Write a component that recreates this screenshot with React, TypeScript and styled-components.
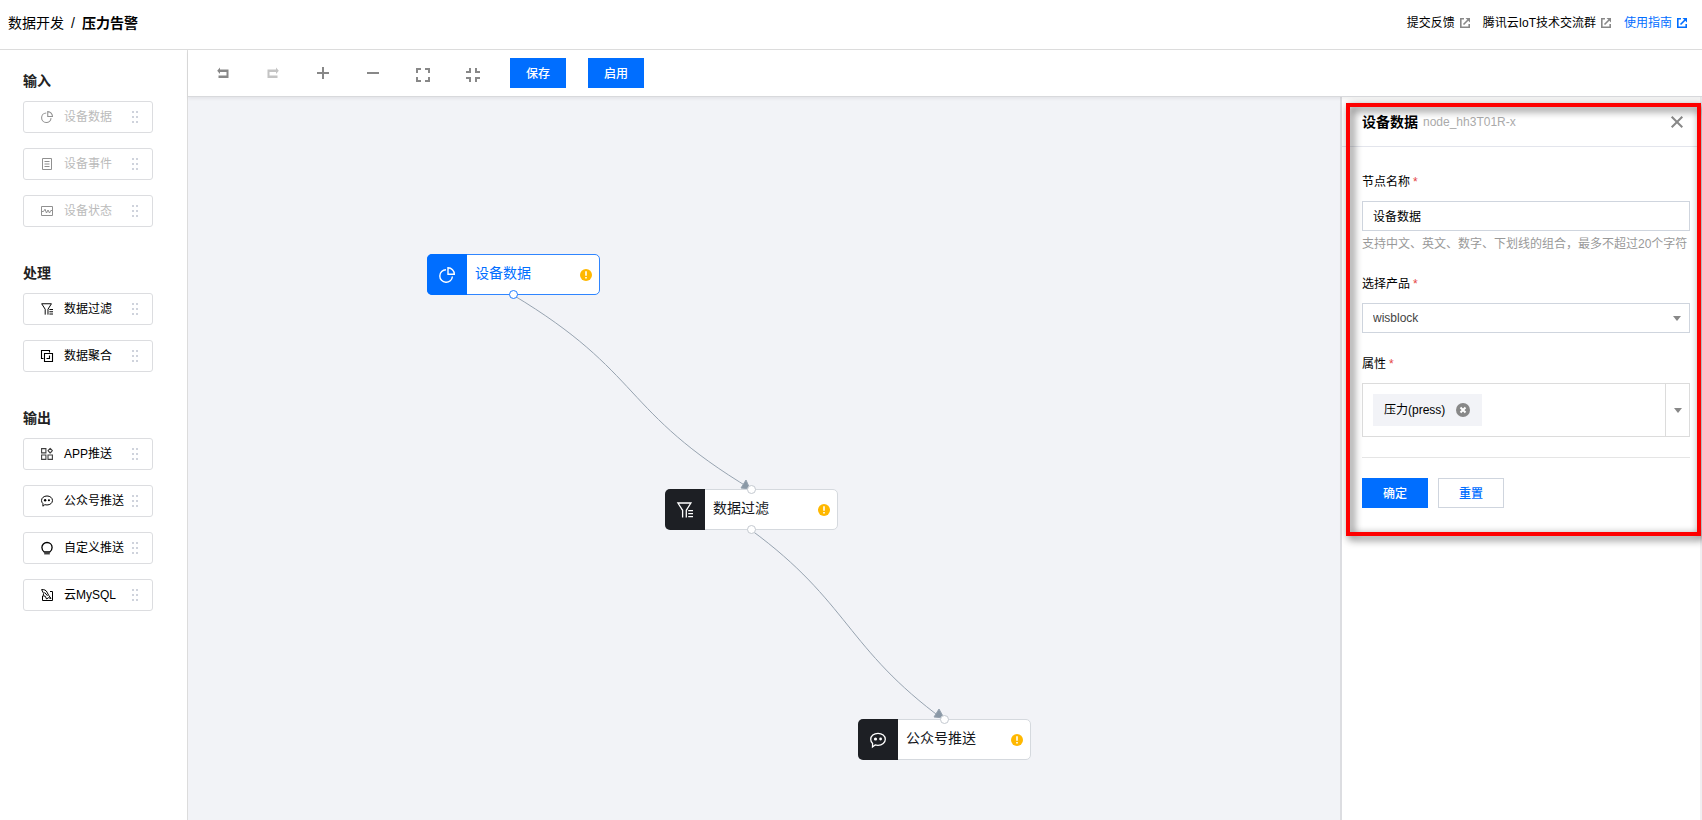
import React from 'react';
import styled, { createGlobalStyle, css } from 'styled-components';

const GlobalStyle = createGlobalStyle`
  *, *::before, *::after { box-sizing: border-box; }
  body {
    margin: 0;
    background: #fff;
    color: #000;
    font: 12px/18px "Liberation Sans", "Noto Sans CJK SC", sans-serif;
  }
  button, input, select { font: inherit; }
  svg { display: block; flex: none; }
`;

/* ---------- icons ---------- */

type IconName =
  | 'pie' | 'list' | 'wave' | 'filter' | 'merge' | 'apps' | 'chat' | 'bulb' | 'mysql'
  | 'undo' | 'redo' | 'plus' | 'minus' | 'expand' | 'shrink' | 'external' | 'close';

const shapes: Record<IconName, { box: number; body: React.ReactNode }> = {
  pie: {
    box: 16,
    body: (
      <g fill="none" stroke="currentColor" strokeWidth="1.4">
        <path d="M7 2.7A6.3 6.3 0 1 0 13.4 9.5" />
        <path d="M9 .8v6.4h6.3A6.3 6.3 0 0 0 9 .8z" />
      </g>
    ),
  },
  list: {
    box: 12,
    body: (
      <g fill="none" stroke="currentColor">
        <path d="M1.5.5h9v11h-9z" />
        <path d="M3.5 3.5h5M3.5 6h5M3.5 8.5h5" />
      </g>
    ),
  },
  wave: {
    box: 12,
    body: (
      <g fill="none" stroke="currentColor">
        <path d="M.5 1.5h11v9H.5z" />
        <path d="M1 6.5h1.5L4 4.2 5.5 8 7 5l1.5 3L9.800 5.500H11" />
      </g>
    ),
  },
  filter: {
    box: 16,
    body: (
      <g fill="none" stroke="currentColor" strokeWidth="1.3">
        <path d="M5.6 15.5V8.300L.9 1h13L9.300 8.300V15.500" />
        <path d="M11.2 8.700H16M11.200 11.700H16M11.200 14.700H16" />
      </g>
    ),
  },
  merge: {
    box: 12,
    body: (
      <g fill="none" stroke="currentColor" strokeWidth="1.1">
        <path d="M2.5 8.500H.5v-8h8v2" />
        <path d="M3.5 3.500h8v8h-8z" />
        <path d="M8.500 5.500v3h-3" />
      </g>
    ),
  },
  apps: {
    box: 12,
    body: (
      <g fill="none" stroke="currentColor" strokeWidth="1.1" opacity=".75">
        <path d="M.6.6h4.300v4.300H.6zM.6 7h4.300v4.400H.6zM7 7h4.400v4.400H7z" />
        <path d="M9.200.4l2.200 2.300-2.200 2.300L7 2.700z" strokeLinejoin="round" />
      </g>
    ),
  },
  chat: {
    box: 16,
    body: (
      <g>
        <path
          d="M8 1.300c4.200 0 7.300 2.600 7.300 6S12.200 13.300 8 13.300c-1 0-2-.1-2.900-.4l-2.600 2 .1-3.400C1.400 10.400.7 9 .7 7.300c0-3.400 3.100-6 7.300-6z"
          fill="none" stroke="currentColor" strokeWidth="1.3"
        />
        <circle cx="5.500" cy="7" r="1.600" fill="currentColor" />
        <circle cx="10.600" cy="7" r="1.400" fill="currentColor" />
      </g>
    ),
  },
  bulb: {
    box: 12,
    body: (
      <g fill="none" stroke="currentColor" strokeWidth="1.3">
        <path d="M3.200 10C1.800 9 .9 7.500.9 5.600.9 2.700 3.100.5 6 .5s5.100 2.200 5.100 5.100c0 1.900-.9 3.400-2.300 4.400z" />
        <path d="M3.200 11.800h5.600" strokeWidth="1.100" />
      </g>
    ),
  },
  mysql: {
    box: 12,
    body: (
      <g fill="none" stroke="currentColor" strokeWidth="1">
        <path d="M1.500 7v4.500h10v-9H9" />
        <path d="M.6.6c2.500-.3 4.500.6 5.500 2.600.6 1.200 1 2.500 1.800 3.400L10 9.500 7.500 8.700 5.600 10 4.200 7.200 2 6.800 2.700 4.600z" />
        <path d="M3.500 3.300l3 3.500" />
      </g>
    ),
  },
  undo: {
    box: 16,
    body: <path d="M5 2.500v2h8.500v8.500H3.500v-2.500h8V7H5v2L2.200 5.750z" fill="currentColor" />,
  },
  redo: {
    box: 16,
    body: <path d="M11 2.500v2H2.500v8.500h10v-2.500h-8V7H11v2l2.800-3.250z" fill="currentColor" />,
  },
  plus: { box: 16, body: <path d="M7 2h2v5h5v2H9v5H7V9H2V7h5z" fill="currentColor" /> },
  minus: { box: 16, body: <path d="M2 7h12v2H2z" fill="currentColor" /> },
  expand: {
    box: 16,
    body: <path d="M1 1h5v2H3v3H1zM10 1h5v5h-2V3h-3zM1 10h2v3h3v2H1zM13 10h2v5h-5v-2h3z" fill="currentColor" />,
  },
  shrink: {
    box: 16,
    body: <path d="M4 1h2v5H1V4h3zM10 1h2v3h3v2h-5zM1 10h5v5H4v-3H1zM10 10h5v2h-3v3h-2z" fill="currentColor" />,
  },
  external: {
    box: 10,
    body: (
      <g fill="none" stroke="currentColor" strokeWidth="1.6">
        <path d="M4 .8H.8v8.400h8.400V6" />
        <path d="M3.500 6.500 8 2" />
        <path d="M5.500 0H10v4.500z" fill="currentColor" stroke="none" />
      </g>
    ),
  },
  close: { box: 12, body: <path d="M.7.7l10.600 10.600M11.300.7L.7 11.300" stroke="currentColor" strokeWidth="2" /> },
};

const Icon = ({ name, size }: { name: IconName; size: number }) => (
  <svg width={size} height={size} viewBox={`0 0 ${shapes[name].box} ${shapes[name].box}`} overflow="visible" aria-hidden="true">
    {shapes[name].body}
  </svg>
);

const Grip = () => (
  <svg width="6" height="12" viewBox="0 0 6 12" fill="#cfd3dc" aria-hidden="true">
    {[0, 5, 10].map((y) => (
      <React.Fragment key={y}>
        <rect x="0" y={y} width="2" height="2" />
        <rect x="4" y={y} width="2" height="2" />
      </React.Fragment>
    ))}
  </svg>
);

/* ---------- page frame ---------- */

const Page = styled.div`
  display: flex;
  flex-direction: column;
  min-height: 100vh;
`;

const Header = styled.header`
  display: flex;
  align-items: center;
  justify-content: space-between;
  height: 50px;
  padding: 0 15px 4px 8px;
  border-bottom: 1px solid #dcdcdc;
`;

const Breadcrumb = styled.nav`
  display: flex;
  gap: 7px;
  font-size: 14px;
  line-height: 20px;
  a { color: inherit; text-decoration: none; }
`;

const HeaderLinks = styled.nav`
  display: flex;
  gap: 13px;
`;

const HeaderLink = styled.a<{ $primary?: boolean }>`
  display: flex;
  align-items: center;
  gap: 5px;
  color: ${(p) => (p.$primary ? '#006eff' : '#000')};
  text-decoration: none;
  svg { color: ${(p) => (p.$primary ? '#006eff' : '#888')}; }
`;

const Body = styled.div`
  display: flex;
  flex: 1;
`;

/* ---------- palette ---------- */

const Palette = styled.aside`
  display: flex;
  flex-direction: column;
  gap: 36px;
  flex: 0 0 188px;
  padding: 21px 34px 0 23px;
  border-right: 1px solid #dcdcdc;
`;

const PaletteGroup = styled.section`
  display: flex;
  flex-direction: column;
  gap: 15px;
`;

const PaletteTitle = styled.h2`
  margin: 0 0 -5px;
  font-size: 14px;
  line-height: 20px;
  font-weight: 700;
  color: #222;
`;

const PaletteItem = styled.button`
  display: grid;
  grid-template-columns: 23px 1fr 6px;
  align-items: center;
  height: 32px;
  padding: 0 14px 0 17px;
  border: 1px solid #dcdde0;
  border-radius: 3px;
  background: #fff;
  color: #000;
  text-align: left;
  white-space: nowrap;
  cursor: grab;
  &:disabled { color: #bbb; cursor: default; }
  &:disabled > svg:first-child { color: #909090; }
`;

/* ---------- editor ---------- */

const Editor = styled.main`
  display: flex;
  flex-direction: column;
  flex: 1;
  min-width: 0;
`;

const Toolbar = styled.div`
  position: relative;
  z-index: 1;
  display: flex;
  align-items: center;
  height: 47px;
  padding-left: 10px;
  border-bottom: 1px solid #d8d9dc;
  box-shadow: 0 2px 3px rgba(0, 0, 0, 0.06);
  background: #fff;
`;

const ToolButton = styled.button<{ $low?: boolean }>`
  display: flex;
  justify-content: center;
  width: 50px;
  padding: ${(p) => (p.$low ? '4px 0 0' : '0')};
  border: 0;
  background: none;
  color: #888;
  &:disabled { color: #c4c4c4; }
`;

const Button = styled.button<{ $kind?: 'plain'; $wide?: boolean }>`
  width: ${(p) => (p.$wide ? 66 : 56)}px;
  height: 30px;
  padding: 1px 0 0;
  border: 1px solid #006eff;
  background: #006eff;
  color: #fff;
  font-weight: 500;
  ${(p) => p.$kind === 'plain' && css`
    border-color: #cfd5de;
    background: #fff;
    color: #006eff;
  `}
`;

const ToolbarActions = styled.div`
  display: flex;
  gap: 22px;
  margin-left: 12px;
`;

const Workspace = styled.div`
  display: flex;
  flex: 1;
`;

const Canvas = styled.div`
  position: relative;
  flex: 1;
  min-width: 0;
  overflow: hidden;
  background: #f2f3f7;
`;

const Edges = styled.svg`
  position: absolute;
  inset: 0;
  width: 100%;
  height: 100%;
`;

const Node = styled.div<{ $x: number; $y: number; $active?: boolean }>`
  position: absolute;
  left: ${(p) => p.$x}px;
  top: ${(p) => p.$y}px;
  display: flex;
  align-items: center;
  width: 173px;
  height: 41px;
  padding-right: 7px;
  border: 1px solid ${(p) => (p.$active ? '#2f85ff' : '#d5d9de')};
  border-radius: 5px;
  background: #fff;
  color: ${(p) => (p.$active ? '#006eff' : '#16181d')};
  font-size: 14px;
  line-height: 20px;
`;

const NodeIcon = styled.span<{ $active?: boolean }>`
  display: flex;
  align-items: center;
  justify-content: center;
  width: 40px;
  height: 41px;
  margin: -1px 8px -1px -1px;
  border-radius: 5px 0 0 5px;
  background: ${(p) => (p.$active ? '#006eff' : '#1d1f24')};
  color: #fff;
`;

const NodeLabel = styled.span`
  flex: 1;
  padding-bottom: 3px;
`;

const Port = styled.span<{ $side: 'top' | 'bottom'; $active?: boolean }>`
  position: absolute;
  left: 50%;
  ${(p) => p.$side}: -5px;
  width: 9px;
  height: 9px;
  margin-left: -5px;
  border: 1px solid ${(p) => (p.$active ? '#1f7cff' : '#c4c9d0')};
  border-radius: 50%;
  background: #fff;
`;

const Warning = () => (
  <svg width="12" height="12" viewBox="0 0 12 12" role="img" aria-label="警告">
    <circle cx="6" cy="6" r="6" fill="#ffb800" />
    <path d="M5.200 2.300h1.600v4.500H5.200zM5.200 8h1.600v1.600H5.200z" fill="#fff" />
  </svg>
);

/* ---------- settings panel ---------- */

const Panel = styled.aside`
  position: relative;
  flex: 0 0 362px;
  border-left: 2px solid #dcdde1;
  border-right: 2px solid #f0f0f2;
  background: #fff;
`;

const Highlight = styled.div`
  position: absolute;
  z-index: 2;
  top: 6px;
  left: 4px;
  right: -1px;
  height: 433px;
  border: 4px solid #fe0000;
  filter: drop-shadow(3px 3px 4px rgba(0, 0, 0, 0.7));
  pointer-events: none;
`;

const PanelHeader = styled.div`
  display: flex;
  align-items: center;
  gap: 5px;
  height: 50px;
  padding: 0 17px 0 20px;
  border-bottom: 1px solid #e3e5ec;
  h3 { margin: 0; font-size: 14px; line-height: 20px; }
  span { flex: 1; color: #aaa; }
`;

const CloseButton = styled.button`
  padding: 0;
  border: 0;
  background: none;
  color: #888;
`;

const Form = styled.form`
  padding: 26px 10px 0 20px;
`;

const Field = styled.div`
  margin-bottom: 22px;
`;

const Label = styled.label`
  display: block;
  margin-bottom: 10px;
  i { padding-left: 3px; color: #e54545; font-style: normal; }
`;

const TextInput = styled.input`
  display: block;
  width: 100%;
  height: 30px;
  padding: 0 10px 2px;
  border: 1px solid #cfd5de;
  background: #fff;
  color: #000;
`;

const Hint = styled.p`
  margin: 4px 0 0;
  color: #999;
  white-space: nowrap;
`;

const SelectBox = styled.div`
  position: relative;
  select {
    display: block;
    width: 100%;
    height: 30px;
    padding: 0 10px;
    border: 1px solid #cfd5de;
    border-radius: 0;
    background: #fff;
    color: #444;
    appearance: none;
  }
  svg { position: absolute; right: 9px; top: 13px; }
`;

const Caret = () => (
  <svg width="8" height="5" viewBox="0 0 8 5" aria-hidden="true">
    <path d="M0 0h8L4 5z" fill="#888" />
  </svg>
);

const TagBox = styled.div`
  display: flex;
  height: 54px;
  border: 1px solid #dcdcdc;
`;

const Tags = styled.div`
  flex: 1;
  padding: 10px;
`;

const Tag = styled.span`
  display: inline-flex;
  align-items: center;
  gap: 11px;
  height: 32px;
  padding: 0 12px 0 11px;
  background: #f2f3f7;
  button { padding: 0; border: 0; background: none; }
`;

const TagToggle = styled.button`
  display: flex;
  align-items: center;
  justify-content: center;
  width: 24px;
  padding: 0;
  border: 0;
  border-left: 1px solid #dcdcdc;
  background: #fff;
`;

const Actions = styled.div`
  display: flex;
  gap: 10px;
  margin-top: 20px;
  padding-top: 20px;
  border-top: 1px solid #e5e5e5;
`;

/* ---------- data ---------- */

const groups: { title: string; disabled?: boolean; items: [IconName, string][] }[] = [
  { title: '输入', disabled: true, items: [['pie', '设备数据'], ['list', '设备事件'], ['wave', '设备状态']] },
  { title: '处理', items: [['filter', '数据过滤'], ['merge', '数据聚合']] },
  { title: '输出', items: [['apps', 'APP推送'], ['chat', '公众号推送'], ['bulb', '自定义推送'], ['mysql', '云MySQL']] },
];

const tools: { icon: IconName; label: string; disabled?: boolean; low?: boolean }[] = [
  { icon: 'undo', label: '撤销' },
  { icon: 'redo', label: '重做', disabled: true },
  { icon: 'plus', label: '放大' },
  { icon: 'minus', label: '缩小' },
  { icon: 'expand', label: '全屏', low: true },
  { icon: 'shrink', label: '退出全屏', low: true },
];

const nodes: { icon: IconName; label: string; x: number; y: number; active?: boolean; ports: ('top' | 'bottom')[] }[] = [
  { icon: 'pie', label: '设备数据', x: 239, y: 157, active: true, ports: ['bottom'] },
  { icon: 'filter', label: '数据过滤', x: 477, y: 392, ports: ['top', 'bottom'] },
  { icon: 'chat', label: '公众号推送', x: 670, y: 622, ports: ['top'] },
];

const links: [string, boolean][] = [['提交反馈', false], ['腾讯云IoT技术交流群', false], ['使用指南', true]];

export default function App() {
  return (
    <Page>
      <GlobalStyle />
      <Header>
        <Breadcrumb>
          <a href="#develop">数据开发</a>
          <span>/</span>
          <strong>压力告警</strong>
        </Breadcrumb>
        <HeaderLinks>
          {links.map(([text, primary]) => (
            <HeaderLink key={text} href="#link" $primary={primary}>
              {text}
              <Icon name="external" size={10} />
            </HeaderLink>
          ))}
        </HeaderLinks>
      </Header>
      <Body>
        <Palette>
          {groups.map((group) => (
            <PaletteGroup key={group.title}>
              <PaletteTitle>{group.title}</PaletteTitle>
              {group.items.map(([icon, text]) => (
                <PaletteItem key={text} type="button" disabled={group.disabled}>
                  <Icon name={icon} size={12} />
                  {text}
                  <Grip />
                </PaletteItem>
              ))}
            </PaletteGroup>
          ))}
        </Palette>
        <Editor>
          <Toolbar>
            {tools.map((tool) => (
              <ToolButton key={tool.icon} type="button" aria-label={tool.label} disabled={tool.disabled} $low={tool.low}>
                <Icon name={tool.icon} size={16} />
              </ToolButton>
            ))}
            <ToolbarActions>
              <Button type="button">保存</Button>
              <Button type="button">启用</Button>
            </ToolbarActions>
          </Toolbar>
          <Workspace>
            <Canvas>
              <Edges fill="none" stroke="#97a3b0">
                <path d="M325 198C455 276 433 314 563 392" />
                <path d="M563 433C661 505 658 551 756 623" />
                <path d="M562 392l-9-1 5-8z" fill="#8a98a6" />
                <path d="M756 621l-10-1 5-8z" fill="#8a98a6" />
              </Edges>
              {nodes.map((node) => (
                <Node key={node.label} $x={node.x} $y={node.y} $active={node.active}>
                  <NodeIcon $active={node.active}>
                    <Icon name={node.icon} size={16} />
                  </NodeIcon>
                  <NodeLabel>{node.label}</NodeLabel>
                  <Warning />
                  {node.ports.map((side) => (
                    <Port key={side} $side={side} $active={node.active} />
                  ))}
                </Node>
              ))}
            </Canvas>
            <Panel>
              <PanelHeader>
                <h3>设备数据</h3>
                <span>node_hh3T01R-x</span>
                <CloseButton type="button" aria-label="关闭">
                  <Icon name="close" size={12} />
                </CloseButton>
              </PanelHeader>
              <Form onSubmit={(e) => e.preventDefault()}>
                <Field>
                  <Label htmlFor="node-name">节点名称<i>*</i></Label>
                  <TextInput id="node-name" defaultValue="设备数据" />
                  <Hint>支持中文、英文、数字、下划线的组合，最多不超过20个字符</Hint>
                </Field>
                <Field>
                  <Label htmlFor="product">选择产品<i>*</i></Label>
                  <SelectBox>
                    <select id="product" defaultValue="wisblock">
                      <option>wisblock</option>
                    </select>
                    <Caret />
                  </SelectBox>
                </Field>
                <Label htmlFor="attribute">属性<i>*</i></Label>
                <TagBox>
                  <Tags>
                    <Tag>
                      压力(press)
                      <button type="button" aria-label="移除">
                        <svg width="14" height="14" viewBox="0 0 14 14">
                          <circle cx="7" cy="7" r="7" fill="#888" />
                          <path d="M4.500 4.500l5 5M9.500 4.500l-5 5" stroke="#fff" strokeWidth="2" />
                        </svg>
                      </button>
                    </Tag>
                  </Tags>
                  <TagToggle id="attribute" type="button" aria-label="展开">
                    <Caret />
                  </TagToggle>
                </TagBox>
                <Actions>
                  <Button type="submit" $wide>确定</Button>
                  <Button type="reset" $wide $kind="plain">重置</Button>
                </Actions>
              </Form>
              <Highlight />
            </Panel>
          </Workspace>
        </Editor>
      </Body>
    </Page>
  );
}
